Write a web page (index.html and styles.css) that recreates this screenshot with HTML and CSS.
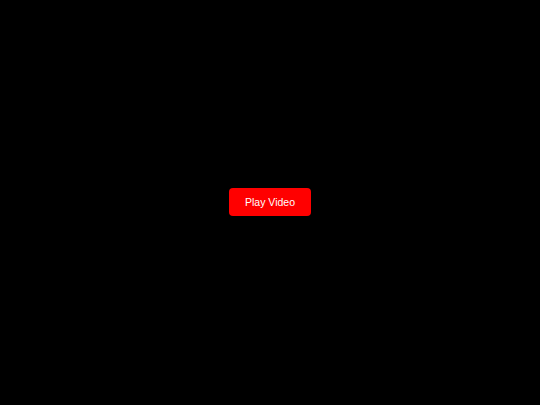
FILE: index.html
```html
<!DOCTYPE html>
<html>
<head>
<meta charset="utf-8">
<link rel="stylesheet" href="styles.css">
</head>
<body>
<main class="stage">
  <button class="play-btn" type="button">Play Video</button>
</main>
</body>
</html>
```
FILE: styles.css
```css
html, body {
  margin: 0;
  padding: 0;
  background: #000;
  height: 100%;
}
.stage {
  width: 540px;
  height: 404px;
  display: flex;
  align-items: center;
  justify-content: center;
}
.play-btn {
  background: #ff0000;
  color: #fff;
  border: none;
  border-radius: 4px;
  font-family: "Liberation Sans", Arial, sans-serif;
  font-size: 10.5px;
  line-height: 14px;
  padding: 7px 0;
  width: 82px;
  height: 28px;
  cursor: pointer;
}
```
